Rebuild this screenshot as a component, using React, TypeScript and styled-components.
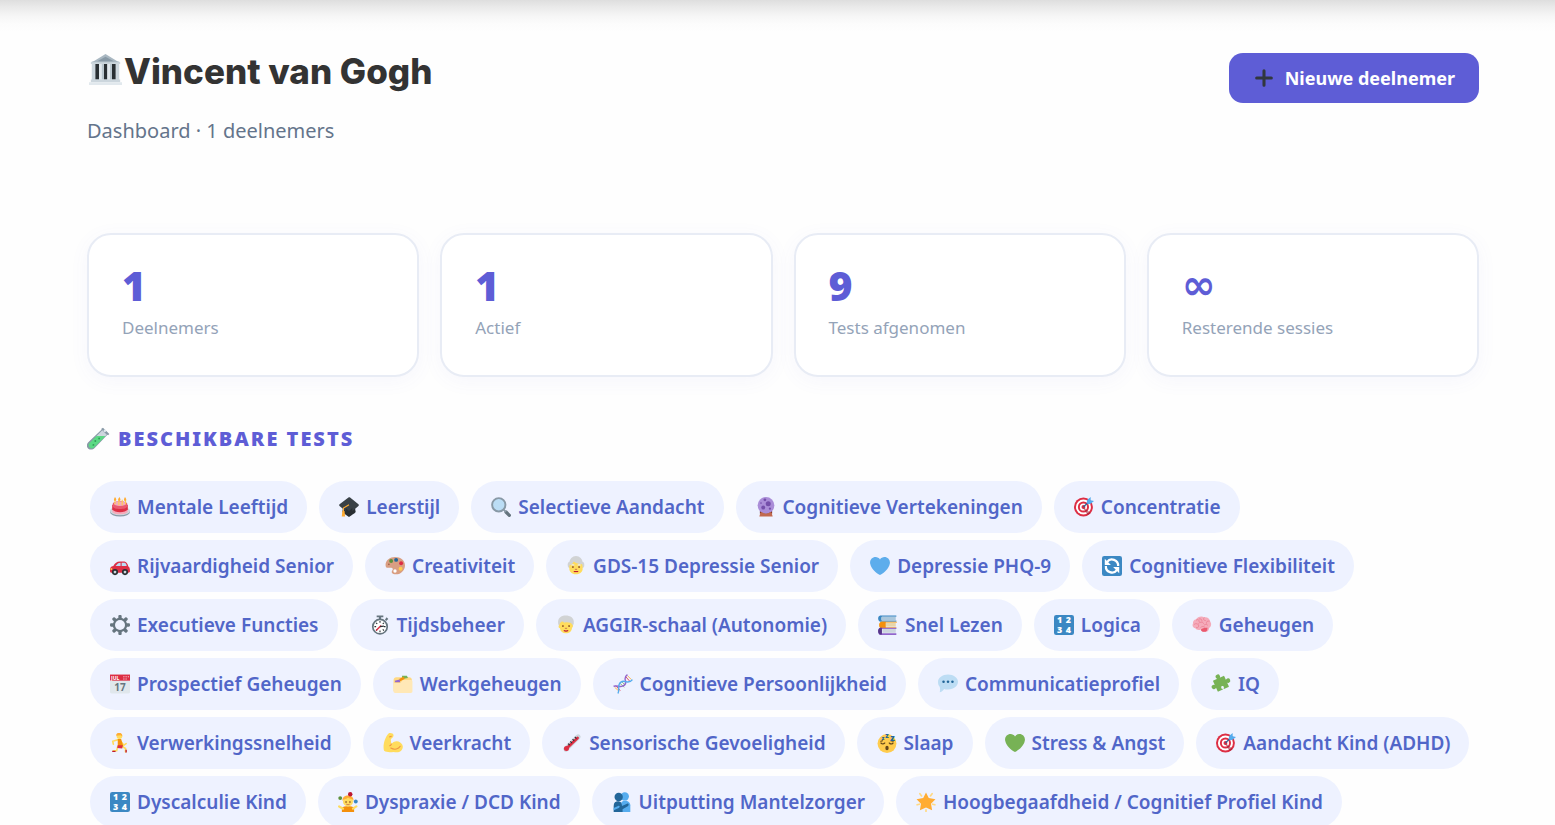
import React from "react";
import styled, { createGlobalStyle } from "styled-components";

const GlobalStyle = createGlobalStyle`
  *, *::before, *::after { box-sizing: border-box; }
  body {
    margin: 0;
    background: #fefefe;
    color: #333;
    font-family: "Noto Sans", "Open Sans", sans-serif;
  }
`;

const TopFade = styled.div`
  height: 32px;
  background: linear-gradient(#dedede, #e9e9e9 20%, #f6f6f6 50%, #fcfcfc 75%, #fefefe);
`;

const Page = styled.main`
  padding: 15px 76px 24px 87px;
`;

const Header = styled.header`
  display: flex;
  justify-content: space-between;
  align-items: flex-start;
`;

const Title = styled.h1`
  display: flex;
  align-items: center;
  gap: 2px;
  margin: 0;
  padding-left: 2px;
  font-family: Inter, "Open Sans", sans-serif;
  font-size: 35px;
  font-weight: 800;
  line-height: 48px;

  svg {
    margin-bottom: 4px;
  }
`;

const Subtitle = styled.p`
  margin: 22px 0 0;
  color: #64748b;
  font-size: 20px;
  line-height: 28px;
`;

const PrimaryButton = styled.button`
  display: flex;
  align-items: center;
  gap: 10px;
  height: 50px;
  margin-top: 6px;
  padding: 0 24px;
  border: 0;
  border-radius: 14px;
  background: #5e5dd6;
  color: #fff;
  font-family: inherit;
  font-size: 18px;
  font-weight: 700;
  cursor: pointer;
`;

const Stats = styled.section`
  display: grid;
  grid-template-columns: repeat(4, 1fr);
  gap: 21px;
  margin-top: 88px;
`;

const StatCard = styled.article`
  height: 144px;
  padding: 24px 33px;
  border: 2px solid #e8ecf5;
  border-radius: 24px;
  background: #fff;
  box-shadow: 0 4px 20px rgba(94, 93, 214, 0.05);
`;

const StatValue = styled.div<{ $symbol?: boolean }>`
  color: #5e5dd6;
  font-family: ${(p) => (p.$symbol ? '"DejaVu Sans", sans-serif' : "inherit")};
  font-size: 41px;
  font-weight: 900;
  line-height: 52px;
`;

const StatLabel = styled.div`
  margin-top: 5px;
  color: #94a3b8;
  font-size: 17px;
  line-height: 24px;
`;

const SectionTitle = styled.h2`
  display: flex;
  align-items: center;
  gap: 8px;
  margin: 47px 0 28px;
  color: #5e5dd6;
  font-size: 20px;
  font-weight: 900;
  letter-spacing: 2px;
  line-height: 29px;
  text-transform: uppercase;
`;

const TestList = styled.ul`
  display: flex;
  flex-wrap: wrap;
  gap: 7px 12px;
  margin: 0;
  padding: 0 3px;
  list-style: none;
`;

const TestChip = styled.li`
  display: flex;
  align-items: center;
  gap: 7px;
  height: 52px;
  padding: 0 19px 0 20px;
  border-radius: 26px;
  background: #eef2ff;
  color: #5166c8;
  font-size: 19px;
  font-weight: 600;
  white-space: nowrap;
`;

const Glyph = styled.svg<{ $size: number }>`
  flex: none;
  width: ${(p) => p.$size}px;
  height: ${(p) => p.$size}px;
`;

const HEART =
  "M35.885 11.833c0-5.45-4.418-9.868-9.867-9.868-3.308 0-6.227 1.633-8.018 4.129-1.791-2.496-4.71-4.129-8.017-4.129-5.45 0-9.868 4.417-9.868 9.868 0 .772.098 1.52.266 2.241C1.751 22.587 11.216 31.568 18 34.034c6.783-2.466 16.249-11.447 17.617-19.959.17-.721.268-1.469.268-2.242z";

const glyphs: Record<string, React.ReactNode> = {
  museum: (
    <>
      <path fill="#CCD6DD" d="M3 9h30v21H3z" />
      <path fill="#292F33" d="M7 12h4v17H7zm9 0h4v17h-4zm9 0h4v17h-4z" />
      <path fill="#E1E8ED" d="M11 11h5v19h-5zm9 0h5v19h-5z" />
      <path fill="#B8C5CD" d="M14 12h2v17h-2zm9 0h2v17h-2z" />
      <path fill="#AAB8C2" d="M2 11 18 1l16 10z" />
      <path fill="#8899A6" d="m9 9 9-5 9 5z" />
      <path fill="#CCD6DD" d="M2 10h32v2H2zM2 29h32v3H2z" />
      <path fill="#E1E8ED" d="M0 32h36v3H0z" />
    </>
  ),
  plus: <path fill="#31373D" d="M30 15.500H20.500V6a2.500 2.500 0 1 0-5 0v9.500H6a2.500 2.500 0 1 0 0 5h9.500V30a2.500 2.500 0 1 0 5 0v-9.500H30a2.500 2.500 0 1 0 0-5z" />,
  tube: (
    <>
      <path fill="#8899A6" d="m25 1 10 10-2 2-1-1-20 21c-3 3-7 3-10 1-3-3-3-7 0-10L23 4l-1-1z" />
      <path fill="#CCD6DD" d="m24 5 7 7-4 4H13z" />
      <path fill="#5BD984" d="M15 14h14L11 32c-2 2-5 2-7 0s-2-5 0-7z" />
      <circle fill="#2F9E58" cx="19" cy="18" r="1.5" /><circle fill="#2F9E58" cx="13" cy="22" r="1.5" />
      <circle fill="#2F9E58" cx="10" cy="28" r="1.5" /><circle fill="#E1E8ED" cx="28" cy="6" r="2" />
    </>
  ),
  cake: (
    <>
      <ellipse fill="#8899A6" cx="18" cy="27" rx="18" ry="8" />
      <ellipse fill="#CCD6DD" cx="18" cy="25" rx="18" ry="8" />
      <path fill="#F4ABBA" d="M4 19h28v7c-2 7-26 7-28 0z" />
      <path fill="#DD2E44" d="M4 14v8c4 7 24 7 28 0v-8z" />
      <path fill="#EA596E" d="M5 12c0-6 26-6 26 0v5c-1 6-25 6-26 0z" />
      <ellipse fill="#F4ABBA" cx="18" cy="12" rx="11" ry="4" />
      <path stroke="#FFCC4D" strokeWidth="2" d="M9 5v8M16 5v10M22 5v10M28 5v8" />
      <path fill="#FFAC33" d="M9 0c4 5 2 7 0 7S6 5 9 0zm8 0c3 5 2 7 0 7s-4-2 0-7zm10 0c4 5 2 7 0 7s-3-2 0-7z" />
    </>
  ),
  cap: (
    <>
      <path fill="#292F33" d="M8 15h20l2 12c-4 7-20 7-24 0z" />
      <path fill="#394146" d="M17 1c1-1 2-1 3 0l15 12c1 1 1 2 0 3L20 29c-1 1-3 1-4 0L1 16c-1-1-1-2 0-3z" />
      <path fill="#292F33" d="m12 20 6 5 6-5v12l-6 4-6-4z" />
      <path fill="none" stroke="#FFAC33" strokeWidth="2" d="M18 14 8 20v7" />
      <path fill="#FFAC33" d="M6 25h4l1 10H5z" />
    </>
  ),
  search: (
    <>
      <path stroke="#66757F" strokeWidth="6" strokeLinecap="round" d="m27 27 6 6" />
      <path stroke="#8899A6" strokeWidth="3" d="m22 22 5 5" />
      <circle fill="#BBDDF5" stroke="#8899A6" strokeWidth="3.5" cx="14" cy="14" r="12" />
    </>
  ),
  crystal: (
    <>
      <path fill="#662113" d="M7 25h22v5H7z" />
      <circle fill="#AA8DD8" cx="18" cy="15" r="15" />
      <path fill="#C1694F" d="m8 28 2-1c5 4 11 4 16 0l2 1 2 7H6z" />
      <g fill="#744EAA"><circle cx="22" cy="12" r="4.5" /><circle cx="13" cy="19" r="3.5" /><circle cx="16" cy="5" r="2.5" /><circle cx="25" cy="21" r="2" /><circle cx="9" cy="11" r="1.5" /></g>
    </>
  ),
  target: (
    <>
      <circle fill="#DD2E44" cx="17" cy="18" r="17" /><circle fill="#fff" cx="17" cy="18" r="13.5" />
      <circle fill="#DD2E44" cx="17" cy="18" r="10" /><circle fill="#fff" cx="17" cy="18" r="6.5" />
      <circle fill="#DD2E44" cx="17" cy="18" r="3.5" />
      <path fill="#9B1B31" opacity=".55" d="m18 19 12 10-5 4-8-12z" />
      <path stroke="#226699" strokeWidth="2" d="M17 18 28 7" />
      <path fill="#55ACEE" d="m23 10 1-5 6-5v6l6 1-6 5-5 1z" />
    </>
  ),
  car: (
    <>
      <path fill="#DD2E44" d="M0 27c0-6 1-8 6-9 3-5 6-8 12-8h8c3 0 6 4 7 9 2 1 3 4 3 8 0 2-1 3-3 3H2c-1 0-2-1-2-3z" />
      <path fill="#BBDDF5" d="M10 18c3-4 5-6 9-6v6zm11-6h5c2 0 4 3 4 6h-9z" />
      <path fill="#FFCC4D" d="M1 22h3v3H1z" />
      <g fill="#292F33"><circle cx="9" cy="29" r="5.5" /><circle cx="27" cy="29" r="5.5" /></g>
      <g fill="#CCD6DD"><circle cx="9" cy="29" r="2.5" /><circle cx="27" cy="29" r="2.5" /></g>
    </>
  ),
  palette: (
    <>
      <path fill="#D99E82" d="M18 2c10 0 18 6 18 15 0 8-7 16-16 16-8 0-9-4-7-7 2-2 1-5-2-5-5 0-10 2-10-5C1 8 9 2 18 2z" />
      <circle fill="#FEFEFE" cx="18" cy="27" r="3" />
      <circle fill="#5C913B" cx="11" cy="9" r="3.5" /><circle fill="#226699" cx="20" cy="7" r="3.5" />
      <circle fill="#DD2E44" cx="29" cy="13" r="3.5" /><circle fill="#FFCC4D" cx="28" cy="23" r="3.5" />
      <circle fill="#9B5B42" cx="7" cy="15" r="1.5" />
    </>
  ),
  oldWoman: (
    <>
      <circle fill="#D1D3D4" cx="18" cy="12" r="12" /><circle fill="#D1D3D4" cx="9" cy="16" r="6" /><circle fill="#D1D3D4" cx="27" cy="16" r="6" />
      <path fill="#FFDC5D" d="M6 17c4-1 7-5 8-7 4 4 10 4 15 5 1 3 1 7 1 9-1 6-6 9-12 9S7 30 6 24z" />
      <path fill="none" stroke="#E6E7E8" strokeWidth="2" d="M10 17c1-2 3-2 5 0m6 0c2-2 4-2 5 0" />
      <g fill="#662113"><circle cx="12.500" cy="20" r="1.500" /><circle cx="23.500" cy="20" r="1.500" /></g>
      <path fill="none" stroke="#C1694F" strokeWidth="1.500" d="M16 24h4" /><path stroke="#BE1931" strokeWidth="2" d="M14 28h8" />
    </>
  ),
  elder: (
    <>
      <path fill="#D1D3D4" d="M4 16C2 5 10 1 17 1c9 0 16 4 15 14l-2 6H6z" />
      <path fill="#FFDC5D" d="M6 18c2-6 5-8 9-4 5-2 13 0 14 3 2 1 2 4 0 6-1 7-5 10-11 10S8 30 7 24c-3-1-3-4-1-6z" />
      <g fill="#662113"><circle cx="12.500" cy="20" r="1.500" /><circle cx="23.500" cy="20" r="1.500" /></g>
      <path fill="none" stroke="#C1694F" strokeWidth="1.500" d="M16 24h4" /><path fill="none" stroke="#BE1931" strokeWidth="2" d="M14 28c2 1 6 1 8 0" />
    </>
  ),
  blueHeart: <path fill="#5DADEC" d={HEART} />,
  greenHeart: <path fill="#77B255" d={HEART} />,
  cycle: (
    <>
      <rect fill="#3B88C3" width="36" height="36" rx="4" />
      <g fill="none" stroke="#fff" strokeWidth="4"><path d="M9 11a11 11 0 0 1 20 7" /><path d="M27 25A11 11 0 0 1 7 18" /></g>
      <path fill="#fff" d="M5 5v11h11zm26 26V20H20z" />
    </>
  ),
  gear: (
    <>
      <g fill="#66757F">
        {[0, 45, 90, 135].map((a) => (
          <rect key={a} x="15" y="0" width="6" height="36" rx="2" transform={`rotate(${a} 18 18)`} />
        ))}
        <circle cx="18" cy="18" r="13" />
      </g>
      <circle fill="#eef2ff" cx="18" cy="18" r="9" />
    </>
  ),
  stopwatch: (
    <>
      <path fill="#66757F" d="M12 1h12v3h-4v5h-4V4h-4zm15 7 3-4 3 3-4 4z" />
      <circle fill="#fff" stroke="#66757F" strokeWidth="3" cx="18" cy="21" r="13" />
      <path stroke="#292F33" strokeWidth="2" d="M18 11v3m0 14v3M8 21h3m14 0h3M11 14l2 2m12-2-2 2m-12 12 2-2m12 2-2-2" />
      <path stroke="#DD2E44" strokeWidth="2.5" d="M20 19 11 28" /><path stroke="#292F33" strokeWidth="2" d="m18 21 7-1" />
    </>
  ),
  books: (
    <>
      <path fill="#3B88C3" d="M4 1h29v2H7v7h26v2H4C-1 11-1 2 4 1z" /><path fill="#AAC7DC" d="M7 3h25v7H7c-2 0-2-7 0-7z" />
      <path fill="#FFAC33" d="M6 12h28v2H9v8h24v2H6c-5-1-5-11 0-12z" /><path fill="#E8D6A9" d="M14 14h18v7H14z" /><path fill="#F4900C" d="M6 12h8v12H6c-5-1-5-11 0-12z" />
      <path fill="#9266CC" d="M4 23h29v2H7v8h26v3H4c-5-1-5-12 0-13z" /><path fill="#CCD6DD" d="M8 25h24v7H8z" /><path fill="#553788" d="M4 23h3v12H4c-5-1-5-11 0-12z" />
    </>
  ),
  numbers: (
    <>
      <rect fill="#3B88C3" width="36" height="36" rx="4" />
      <g fill="#fff" fontFamily="Open Sans, sans-serif" fontSize="16" fontWeight="800" textAnchor="middle">
        <text x="10" y="15">1</text><text x="26" y="15">2</text><text x="10" y="32">3</text><text x="26" y="32">4</text>
      </g>
    </>
  ),
  brain: (
    <>
      <path fill="#F4ABBA" d="M7 8C10 3 17 1 22 4c6-1 10 3 11 8 3 4 1 10-2 11-1 5-3 8-7 7-4 1-7-1-8-4-4 2-8 1-10-2-5-1-6-6-4-9-1-3 2-7 5-7z" />
      <path fill="#EA596E" d="M16 26c4-3 8-3 12-3-1 4 0 6-4 7-4 1-8-1-8-4z" />
      <path fill="none" stroke="#EA8094" strokeWidth="1.5" strokeLinecap="round" d="M8 9c3-2 5 0 5 3M4 17c3-3 6-1 8 1M13 7c3-1 5 1 5 4m4-6c-3 2-1 5 2 5m7 1c-3-1-6 1-5 4m-14 0c2-3 7-3 9 0m-13 8c3 1 4-2 4-4m4 3c1-2 5-2 7 0m5-4c-2-2-5-1-6 0" />
    </>
  ),
  calendar: (
    <>
      <path fill="#E0E7EC" d="M0 11h36v21c0 2-1 3-3 3H3c-2 0-3-1-3-3z" /><path fill="#DD2E44" d="M0 1h36v11H0z" />
      <g fill="#F4ABBA"><circle cx="25" cy="5" r="1.300" /><circle cx="29" cy="5" r="1.300" /><circle cx="33" cy="5" r="1.300" /><circle cx="25" cy="9" r="1.300" /><circle cx="29" cy="9" r="1.300" /></g>
      <text x="2" y="11" fill="#fff" fontFamily="Open Sans, sans-serif" fontSize="9" fontWeight="700">JUL</text>
      <text x="18" y="31" fill="#66757F" fontFamily="Open Sans, sans-serif" fontSize="18" fontWeight="700" textAnchor="middle">17</text>
    </>
  ),
  folders: (
    <>
      <path fill="#FFD983" d="M1 11c0-3 2-5 5-5h23c3 0 5 2 5 5v20H1z" />
      <path fill="#77B255" d="M16 3h9l2 4-10 2z" /><path fill="#F4900C" d="m11 9 8-4 2 4-8 4z" /><path fill="#9266CC" d="m3 12 9-2 1 5H4z" />
      <path fill="#FFE8B6" d="M1 16h12l5-5h14c2 0 3 1 3 3v17c0 2-1 3-3 3H4c-2 0-3-1-3-3z" />
    </>
  ),
  dna: (
    <>
      <path stroke="#DD2E44" strokeWidth="1.500" d="m5 21 8 9M23 5l8 9" /><path stroke="#FFAC33" strokeWidth="1.500" d="m3 24 8 7m15-28 7 7" />
      <path stroke="#77B255" strokeWidth="1.500" d="m13 17 7 7m-4-10 6 6" />
      <path fill="none" stroke="#9266CC" strokeWidth="2.500" d="M1 22c8-2 11 2 16 0s7-6 5-11c-1-5 1-8 4-10" />
      <path fill="none" stroke="#55ACEE" strokeWidth="2.500" d="M9 35c3-6 0-11 2-16s7-7 13-5c5 1 8 0 11-4" />
    </>
  ),
  speech: (
    <>
      <path fill="#BDDDF4" d="M18 1c10 0 18 6 18 13s-7 14-18 14c-3 0-5 0-7-1-2 3-5 6-8 6 1-3 1-7 0-10-2-2-3-5-3-9C0 7 8 1 18 1z" />
      <g fill="#226699"><circle cx="10" cy="14" r="2.300" /><circle cx="18" cy="14" r="2.300" /><circle cx="26" cy="14" r="2.300" /></g>
    </>
  ),
  puzzle: (
    <>
      <g fill="#77B255" transform="rotate(-24 17 18)">
        <rect x="7" y="7" width="22" height="22" rx="1" />
        <circle cx="18" cy="4" r="4" /><path d="M16 5h4v4h-4z" />
        <circle cx="4" cy="18" r="4" /><path d="M5 16h4v4H5z" />
        <circle cx="32" cy="18" r="4" /><path d="M27 16h4v4h-4z" />
      </g>
      <g fill="#eef2ff" transform="rotate(-24 17 18)"><circle cx="18" cy="25" r="2.500" /><path d="M17 26h2v4h-2z" /></g>
    </>
  ),
  runner: (
    <>
      <circle fill="#FFDC5D" cx="17" cy="6" r="5" /><path fill="#FFAC33" d="M11 5c0-8 12-7 11 1l-3-2z" />
      <path fill="none" stroke="#FFDC5D" strokeWidth="3" strokeLinecap="round" d="m14 12-9 3 1 5m14-4 5 6 4-3M14 24l-2 8H6m14-9 8 5v6" />
      <path fill="#F4900C" d="M14 11h6l4 13-10 2z" /><path fill="#DD2E44" d="M14 22h9l-1 6-9-1z" />
      <path stroke="#BE1931" strokeWidth="2.500" d="M4 33h6m19-3v5" />
    </>
  ),
  biceps: (
    <>
      <path fill="#FFDC5D" d="M10 1c3-2 9 0 9 3 0 4-4 5-5 8l1 8c3-5 11-7 16-3 5 3 6 9 3 13-3 5-9 5-15 4-6 1-13 1-17-2C-1 24 3 8 10 1z" />
      <path fill="none" stroke="#EF9645" strokeWidth="2" strokeLinecap="round" d="M15 20c-1 2-1 3-3 3m2 4c7 4 14 2 17-3M12 7l3-1" />
    </>
  ),
  thermometer: (
    <>
      <path stroke="#CCD6DD" strokeWidth="9" strokeLinecap="round" d="M7 29 29 7" />
      <circle fill="#DD2E44" cx="8" cy="28" r="4.500" /><path stroke="#DD2E44" strokeWidth="5" strokeLinecap="round" d="M8 28 28 9" />
      <path stroke="#292F33" strokeWidth="2" d="m11 19 3 3m1-7 3 3m1-7 3 3m1-7 3 3" />
    </>
  ),
  sleep: (
    <>
      <circle fill="#FFCC4D" cx="18" cy="19" r="17" />
      <path fill="none" stroke="#65471B" strokeWidth="2" strokeLinecap="round" d="M7 18c2 2 5 2 7 0m8 0c2 2 5 2 7 0M7 15l3-1m15 0 4 1" />
      <ellipse fill="#65471B" cx="18" cy="27" rx="3" ry="4" />
      <g fill="#226699" fontFamily="Open Sans, sans-serif" fontWeight="800"><text x="8" y="13" fontSize="10">z</text><text x="15" y="9" fontSize="12">z</text><text x="24" y="14" fontSize="16">z</text></g>
    </>
  ),
  juggler: (
    <>
      <path fill="#F4900C" d="M7 28c4-3 18-3 22 0v8H7z" />
      <path fill="none" stroke="#FFDC5D" strokeWidth="4" strokeLinecap="round" d="m9 30-7-4m25 4 6-4" />
      <circle fill="#FFDC5D" cx="18" cy="17" r="9" /><path fill="#FFAC33" d="M8 16c-1-13 21-13 20 0-3-5-8-3-10-6-2 3-7 2-10 6z" />
      <circle fill="#662113" cx="14.500" cy="18" r="1.300" /><circle fill="#662113" cx="21.500" cy="18" r="1.300" /><path fill="none" stroke="#C1694F" strokeWidth="1.500" d="M15 22c2 1 4 1 6 0" />
      <circle fill="#5C913B" cx="4" cy="11" r="3.500" /><circle fill="#BE1931" cx="22" cy="4" r="4" /><circle fill="#3B88C3" cx="32" cy="17" r="3.500" />
    </>
  ),
  hug: (
    <>
      <circle fill="#55ACEE" cx="23" cy="8" r="7.500" /><path fill="#55ACEE" d="M17 18c6-5 16-2 16 6v12H16z" />
      <circle fill="#226699" cx="12" cy="9" r="7.500" /><path fill="#226699" d="M3 25c0-7 5-9 10-8 4 1 5 4 5 8l9-4c3-1 4 2 2 4l-10 6v5H3z" />
      <path fill="#55ACEE" d="m3 29 8-4c3-1 4 2 1 4l-9 4z" />
    </>
  ),
  star: (
    <>
      <g stroke="#FFD983" strokeWidth="3" strokeLinecap="round"><path d="m7 3 3 4M29 3l-3 4M2 23l4-1m28 1-4-1M18 32v3" /></g>
      <path fill="#FFAC33" d="m18 1 5 10 12 2-8 8 2 12-11-5-11 5 2-12-8-8 12-2z" />
    </>
  ),
};

function Icon({ name, size = 20 }: { name: string; size?: number }) {
  return (
    <Glyph $size={size} viewBox="0 0 36 36" aria-hidden="true">
      {glyphs[name]}
    </Glyph>
  );
}

const stats = [
  { value: "1", label: "Deelnemers" },
  { value: "1", label: "Actief" },
  { value: "9", label: "Tests afgenomen" },
  { value: "∞", label: "Resterende sessies", symbol: true },
];

const tests: [string, string][] = [
  ["cake", "Mentale Leeftijd"],
  ["cap", "Leerstijl"],
  ["search", "Selectieve Aandacht"],
  ["crystal", "Cognitieve Vertekeningen"],
  ["target", "Concentratie"],
  ["car", "Rijvaardigheid Senior"],
  ["palette", "Creativiteit"],
  ["oldWoman", "GDS-15 Depressie Senior"],
  ["blueHeart", "Depressie PHQ-9"],
  ["cycle", "Cognitieve Flexibiliteit"],
  ["gear", "Executieve Functies"],
  ["stopwatch", "Tijdsbeheer"],
  ["elder", "AGGIR-schaal (Autonomie)"],
  ["books", "Snel Lezen"],
  ["numbers", "Logica"],
  ["brain", "Geheugen"],
  ["calendar", "Prospectief Geheugen"],
  ["folders", "Werkgeheugen"],
  ["dna", "Cognitieve Persoonlijkheid"],
  ["speech", "Communicatieprofiel"],
  ["puzzle", "IQ"],
  ["runner", "Verwerkingssnelheid"],
  ["biceps", "Veerkracht"],
  ["thermometer", "Sensorische Gevoeligheid"],
  ["sleep", "Slaap"],
  ["greenHeart", "Stress & Angst"],
  ["target", "Aandacht Kind (ADHD)"],
  ["numbers", "Dyscalculie Kind"],
  ["juggler", "Dyspraxie / DCD Kind"],
  ["hug", "Uitputting Mantelzorger"],
  ["star", "Hoogbegaafdheid / Cognitief Profiel Kind"],
];

export default function App() {
  return (
    <>
      <GlobalStyle />
      <TopFade />
      <Page>
        <Header>
          <div>
            <Title>
              <Icon name="museum" size={33} />
              Vincent van Gogh
            </Title>
            <Subtitle>Dashboard · 1 deelnemers</Subtitle>
          </div>
          <PrimaryButton type="button">
            <Icon name="plus" size={22} />
            Nieuwe deelnemer
          </PrimaryButton>
        </Header>
        <Stats>
          {stats.map((s) => (
            <StatCard key={s.label}>
              <StatValue $symbol={s.symbol}>{s.value}</StatValue>
              <StatLabel>{s.label}</StatLabel>
            </StatCard>
          ))}
        </Stats>
        <SectionTitle>
          <Icon name="tube" size={23} />
          Beschikbare tests
        </SectionTitle>
        <TestList>
          {tests.map(([icon, label]) => (
            <TestChip key={label}>
              <Icon name={icon} />
              {label}
            </TestChip>
          ))}
        </TestList>
      </Page>
    </>
  );
}
